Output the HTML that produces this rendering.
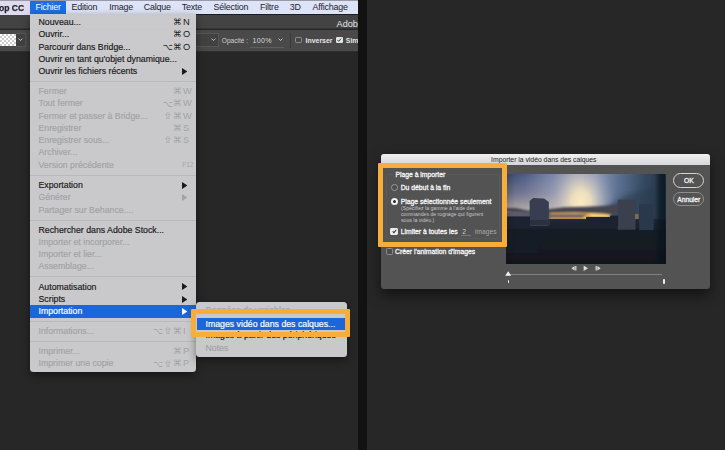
<!DOCTYPE html>
<html lang="fr"><head><meta charset="utf-8"><title>Importer la vidéo dans des calques</title>
<style>
*{margin:0;padding:0;box-sizing:border-box}
html,body{width:725px;height:450px;overflow:hidden;background:#121212}
body{position:relative;font-family:"Liberation Sans","DejaVu Sans",sans-serif;font-size:8.75px;color:#1b1b1b;-webkit-font-smoothing:antialiased}
.abs{position:absolute}
#left{left:0;top:0;width:358px;height:450px;background:#272727;overflow:hidden}
#right{left:367px;top:0;width:358px;height:450px;background:#272727;overflow:hidden}
#mbar{left:0;top:0;width:358px;height:13.7px;background:#dde4f7;border-top:1px solid #9a9aa6}
#mbar .app{left:0;top:0;width:30px;height:13.7px;background:#dedbee}
#mbar span{position:absolute;top:.2px;line-height:13px;font-size:8.9px;letter-spacing:-.18px;color:#23232b;white-space:nowrap}
#mbar .hl{left:30px;top:0;width:36px;height:13.7px;background:#1b6fe4}
#tbar{left:0;top:13.7px;width:358px;height:15.8px;background:#434343;border-top:.6px solid #1c1c1c;border-bottom:.7px solid #353535}
#obar{left:0;top:29.5px;width:358px;height:22px;background:#494949;border-bottom:1px solid #2e2e2e}
.menu{background:rgba(206,206,209,.97);box-shadow:0 3px 8px rgba(0,0,0,.45)}
.mi{position:absolute;left:0;right:0;height:12.25px;line-height:12.25px;white-space:nowrap}
.mi b{position:absolute;left:9px;top:.4px;font-weight:normal;-webkit-text-stroke:.18px currentColor}
.mi i{position:absolute;right:13.6px;top:.4px;font-style:normal;font-size:8.7px;letter-spacing:.3px}
.mi k{position:absolute;left:100%;top:0;margin-left:1.1px;font-size:9.3px;letter-spacing:0}
.mi.d{color:#a3a3a6}
.mi .ar{position:absolute;right:8.2px;top:3px;width:5.4px;height:7px;fill:currentColor}
.mi u{text-decoration:none;font-size:9.4px;line-height:0;position:relative;top:.3px;display:inline-block;transform:scaleX(1.3);margin:0 .9px 0 .5px}
.mi s{text-decoration:none;font-size:8.6px;line-height:0;position:relative;top:.2px;margin-right:-.2px}
.sep{position:absolute;left:0;right:0;height:1px;background:#b9b9bc}

#dlg{left:13.5px;top:154px;width:329px;height:134.5px;background:#535353;border-radius:3px;box-shadow:0 6px 14px rgba(0,0,0,.55);color:#dcdcdc}
#dt{left:0;top:0;width:329px;height:10.9px;background:linear-gradient(#f0f0f0,#d6d6da);border-radius:3px 3px 0 0;color:#222;font-size:6.8px;line-height:11.4px;text-align:center;padding-right:2.4px}
.t{font-size:6.8px;line-height:10px;white-space:nowrap;color:#dedede}
.t.w{color:#f4f4f4;-webkit-text-stroke:.3px #f4f4f4}
.s{font-size:5.15px;line-height:5.85px;white-space:nowrap;color:#c6c6c6}
.rad{width:7.2px;height:7.2px;border-radius:50%;border:.9px solid #9a9a9a;background:#4c4c4c}
.rad.on{width:7.6px;height:7.6px;border:2.4px solid #f2f2f2;background:#2c2c2c}
.cb{width:7.2px;height:7.2px;border-radius:1.4px;border:.9px solid #8c8c8c;background:#4d4d4d}
.cb.on{border:none;background:#ececec}
.btn{width:31.2px;height:14.7px;border:1px solid;border-radius:8px;font-size:6.7px;line-height:14.4px;text-align:center;color:#f2f2f2;-webkit-text-stroke:.3px #f2f2f2}
</style></head><body>
<div id="left" class="abs">
  <div id="tbar" class="abs"><span class="abs" style="left:336.5px;top:3px;color:#e6e6e6;font-size:9.2px;line-height:12px">Adobe</span></div>
  <div id="obar" class="abs">
    <div class="abs" style="left:0;top:4px;width:16px;height:12.6px;background:#fff;background-image:linear-gradient(45deg,#ccc 25%,transparent 25%,transparent 75%,#ccc 75%),linear-gradient(45deg,#ccc 25%,transparent 25%,transparent 75%,#ccc 75%);background-size:4px 4px;background-position:0 0,2px 2px"></div>
    <div class="abs" style="left:16px;top:3.5px;width:9.5px;height:13.6px;background:#414141;border:1px solid #565656;border-left:none"></div>
    <svg class="abs" style="left:18px;top:8.5px" width="5" height="3.4" viewBox="0 0 6 4"><path d="M.7.7 3 3 5.3.7" fill="none" stroke="#d4d4d4" stroke-width="1.1"/></svg>
    <div class="abs" style="left:196px;top:3.5px;width:23px;height:13.6px;background:#414141;border:1px solid #565656;border-left:none"></div>
    <svg class="abs" style="left:210.5px;top:8.5px" width="5" height="3.4" viewBox="0 0 6 4"><path d="M.7.7 3 3 5.3.7" fill="none" stroke="#d4d4d4" stroke-width="1.1"/></svg>
    <span class="abs" style="left:221.8px;top:5px;font-size:6.6px;line-height:11px;color:#d0d0d0;white-space:nowrap">Opacité :</span>
    <span class="abs" style="left:252.6px;top:5px;font-size:7px;letter-spacing:.3px;line-height:11px;color:#dcdcdc;white-space:nowrap">100%</span>
    <div class="abs" style="left:250px;top:17px;width:34px;height:1px;background:#5e5e5e"></div>
    <svg class="abs" style="left:277.6px;top:8.5px" width="5" height="3.4" viewBox="0 0 6 4"><path d="M.7.7 3 3 5.3.7" fill="none" stroke="#d4d4d4" stroke-width="1.1"/></svg>
    <div class="abs" style="left:290px;top:3px;width:1px;height:15px;background:#3a3a3a"></div>
    <div class="abs" style="left:295.4px;top:7.2px;width:6.6px;height:6.6px;border:1px solid #8e8e8e;border-radius:1.3px;background:#474747"></div>
    <span class="abs" style="left:305.6px;top:5px;font-size:6.9px;font-weight:bold;line-height:11px;color:#e8e8e8;white-space:nowrap">Inverser</span>
    <div class="abs" style="left:336.4px;top:7.2px;width:6.6px;height:6.6px;border-radius:1.3px;background:#e4e4e4"></div>
    <svg class="abs" style="left:337.4px;top:8.4px" width="4.6" height="4.2" viewBox="0 0 44 40"><path d="M6 20 17 32 38 6" fill="none" stroke="#333" stroke-width="9"/></svg>
    <span class="abs" style="left:345.8px;top:5px;font-size:6.9px;font-weight:bold;line-height:11px;color:#e8e8e8;white-space:nowrap">Simuler</span>
  </div>
  <div id="mbar" class="abs">
    <div class="app abs"></div><div class="hl abs"></div>
    <span style="left:-1.5px;font-weight:bold;font-size:9.5px;letter-spacing:0;top:-.3px;transform:scaleX(.9);transform-origin:0 50%;-webkit-text-stroke:.25px #23232b">op CC</span>
    <span style="left:35.5px;color:#fff">Fichier</span>
    <span style="left:71.5px">Edition</span>
    <span style="left:109.3px">Image</span>
    <span style="left:143.8px">Calque</span>
    <span style="left:181.8px">Texte</span>
    <span style="left:213.4px">Sélection</span>
    <span style="left:260px">Filtre</span>
    <span style="left:289.8px">3D</span>
    <span style="left:312.6px">Affichage</span>
  </div>
  <!-- main menu -->
  <div class="menu abs" style="left:29.5px;top:13.7px;width:166px;height:358px;border-radius:0 0 3.5px 3.5px">
    <div class="mi" style="top:2.1px"><b>Nouveau...</b><i>⌘<k>N</k></i></div>
    <div class="mi" style="top:14.4px"><b>Ouvrir...</b><i>⌘<k>O</k></i></div>
    <div class="mi" style="top:26.6px"><b>Parcourir dans Bridge...</b><i><s>⌥</s>⌘<k>O</k></i></div>
    <div class="mi" style="top:38.9px"><b>Ouvrir en tant qu'objet dynamique...</b></div>
    <div class="mi" style="top:51px"><b>Ouvrir les fichiers récents</b><svg class="ar" viewBox="0 0 55 70"><path d="M0 0 55 35 0 70z"/></svg></div>
    <div class="sep" style="top:67.6px"></div>
    <div class="mi d" style="top:71px"><b>Fermer</b><i>⌘<k>W</k></i></div>
    <div class="mi d" style="top:83.3px"><b>Tout fermer</b><i><s>⌥</s>⌘<k>W</k></i></div>
    <div class="mi d" style="top:95.5px"><b>Fermer et passer à Bridge...</b><i><u>⇧</u>⌘<k>W</k></i></div>
    <div class="mi d" style="top:107.8px"><b>Enregistrer</b><i>⌘<k>S</k></i></div>
    <div class="mi d" style="top:120px"><b>Enregistrer sous...</b><i><u>⇧</u>⌘<k>S</k></i></div>
    <div class="mi d" style="top:132.3px"><b>Archiver...</b></div>
    <div class="mi d" style="top:144.5px"><b>Version précédente</b><i style="font-size:6.5px;right:2px;letter-spacing:0;top:1px">F12</i></div>
    <div class="sep" style="top:161.4px"></div>
    <div class="mi" style="top:165px"><b>Exportation</b><svg class="ar" viewBox="0 0 55 70"><path d="M0 0 55 35 0 70z"/></svg></div>
    <div class="mi d" style="top:177.2px"><b>Générer</b><svg class="ar" viewBox="0 0 55 70"><path d="M0 0 55 35 0 70z"/></svg></div>
    <div class="mi d" style="top:189.5px"><b>Partager sur Behance....</b></div>
    <div class="sep" style="top:206.3px"></div>
    <div class="mi" style="top:209.6px"><b>Rechercher dans Adobe Stock...</b></div>
    <div class="mi d" style="top:221.9px"><b>Importer et incorporer...</b></div>
    <div class="mi d" style="top:234.1px"><b>Importer et lier...</b></div>
    <div class="mi d" style="top:246.4px"><b>Assemblage...</b></div>
    <div class="sep" style="top:262.7px"></div>
    <div class="mi" style="top:266.7px"><b>Automatisation</b><svg class="ar" viewBox="0 0 55 70"><path d="M0 0 55 35 0 70z"/></svg></div>
    <div class="mi" style="top:279px"><b>Scripts</b><svg class="ar" viewBox="0 0 55 70"><path d="M0 0 55 35 0 70z"/></svg></div>
    <div class="mi" style="top:291.6px;height:12.5px;background:#1a66da;color:#fff"><b style="top:-.5px">Importation</b><svg class="ar" viewBox="0 0 55 70"><path d="M0 0 55 35 0 70z"/></svg></div>
    <div class="sep" style="top:307.4px"></div>
    <div class="mi d" style="top:311px"><b>Informations...</b><i><s>⌥</s><u>⇧</u>⌘<k>I</k></i></div>
    <div class="sep" style="top:327.7px"></div>
    <div class="mi d" style="top:331.2px"><b>Imprimer...</b><i>⌘<k>P</k></i></div>
    <div class="mi d" style="top:343.4px"><b>Imprimer une copie</b><i><s>⌥</s><u>⇧</u>⌘<k>P</k></i></div>
  </div>
  <!-- submenu -->
  <div class="menu abs" style="left:195.5px;top:302.4px;width:151px;height:54.3px;border-radius:3.5px">
    <div class="mi d" style="top:1.4px"><b style="left:10px">Données de variables...</b></div>
    <div class="mi" style="top:15.5px;height:12px;left:1px;right:1.5px;background:#1a66da;color:#fff"><b style="left:9px;top:-.3px">Images vidéo dans des calques...</b></div>
    <div class="mi" style="top:26.6px"><b style="left:10px">Images à partir des périphériques</b></div>
    <div class="mi d" style="top:39.1px"><b style="left:10px">Notes</b></div>
  </div>
  <div class="abs" style="left:191.2px;top:308.7px;width:159.3px;height:28.6px;border:5.5px solid #f6ad3a;border-radius:1px"></div>
</div>
<div id="right" class="abs">
  <div id="dlg" class="abs">
    <div id="dt" class="abs">Importer la vidéo dans des calques</div>
    <!-- group -->
    <div class="abs" style="left:5.5px;top:20.3px;width:113.6px;height:64.6px;border:1px solid #5a5a5a;border-radius:2px"></div>
    <span class="t w abs" style="left:12.9px;top:15.5px;background:#535353;padding:0 2px">Plage à importer</span>
    <div class="rad abs" style="left:10.3px;top:29.6px"></div>
    <span class="t w abs" style="left:20.2px;top:28.9px">Du début à la fin</span>
    <div class="rad on abs" style="left:10.1px;top:43.7px"></div>
    <span class="t w abs" style="left:20.2px;top:42.5px">Plage sélectionnée seulement</span>
    <span class="s abs" style="left:20.5px;top:52.1px">(Spécifiez la gamme à l'aide des<br>commandes de rognage qui figurent<br>sous la vidéo.)</span>
    <div class="cb on abs" style="left:9.9px;top:73.7px"></div>
    <svg class="abs" style="left:11.0px;top:75.0px" width="5" height="4.6" viewBox="0 0 44 40"><path d="M6 20 17 32 38 6" fill="none" stroke="#333" stroke-width="9"/></svg>
    <span class="t w abs" style="left:20.2px;top:72.8px">Limiter à toutes les</span>
    <span class="t abs" style="left:81.8px;top:72.8px;color:#d0d0d0">2</span>
    <div class="abs" style="left:80.1px;top:81.4px;width:10px;height:1px;background:#7a7a7a"></div>
    <span class="t abs" style="left:94.6px;top:72.8px;color:#a9a9a9;font-size:6.65px">images</span>
    <div class="cb abs" style="left:5.0px;top:94.0px"></div>
    <span class="t w abs" style="left:14.6px;top:92.9px">Créer l'animation d'images</span>
    <!-- photo -->
    <svg class="abs" style="left:125.9px;top:20px" width="159.6" height="89.7" viewBox="0 0 159.4 89.6">
      <defs>
        <linearGradient id="sky" x1="0" y1="0" x2="1" y2="0"><stop offset="0" stop-color="#38486f"/><stop offset=".12" stop-color="#4d5c86"/><stop offset=".26" stop-color="#7280a5"/><stop offset=".42" stop-color="#98a0ba"/><stop offset=".56" stop-color="#8c9ab6"/><stop offset=".7" stop-color="#5d7292"/><stop offset=".85" stop-color="#384d66"/><stop offset="1" stop-color="#203243"/></linearGradient>
        <linearGradient id="hz" x1="0" y1="0" x2="0" y2="1"><stop offset="0" stop-color="#d9c4b0" stop-opacity="0"/><stop offset=".45" stop-color="#d0bcb4" stop-opacity=".3"/><stop offset="1" stop-color="#e6d0b4" stop-opacity=".85"/></linearGradient>
        <radialGradient id="sun" cx="75" cy="29" r="40" gradientUnits="userSpaceOnUse" gradientTransform="translate(75 29) scale(.85 1.15) translate(-75 -29)"><stop offset="0" stop-color="#fcecc0"/><stop offset=".28" stop-color="#f2e2be" stop-opacity=".92"/><stop offset=".6" stop-color="#d4ccc4" stop-opacity=".45"/><stop offset="1" stop-color="#9aa0b4" stop-opacity="0"/></radialGradient>
        <linearGradient id="gnd" x1="0" y1="0" x2="0" y2="1"><stop offset="0" stop-color="#222937"/><stop offset=".25" stop-color="#171d26"/><stop offset="1" stop-color="#10161c"/></linearGradient>
        <linearGradient id="wedge" x1="0" y1="0" x2="1" y2="0"><stop offset="0" stop-color="#4a5d78"/><stop offset=".5" stop-color="#31455b"/><stop offset="1" stop-color="#1d2c3a"/></linearGradient>
        <filter id="bl" x="-5%" y="-5%" width="110%" height="110%"><feGaussianBlur stdDeviation=".6"/></filter>
        <filter id="bl2" x="-20%" y="-40%" width="140%" height="180%"><feGaussianBlur stdDeviation="1.1"/></filter>
        <filter id="bl3" x="-30%" y="-30%" width="160%" height="160%"><feGaussianBlur stdDeviation="3"/></filter>
        <linearGradient id="vig" x1="0" y1="0" x2="1" y2="0"><stop offset="0" stop-color="#000" stop-opacity=".12"/><stop offset=".06" stop-color="#000" stop-opacity="0"/><stop offset=".93" stop-color="#06121a" stop-opacity="0"/><stop offset=".965" stop-color="#06121a" stop-opacity=".6"/><stop offset="1" stop-color="#06121a" stop-opacity=".75"/></linearGradient>
      </defs>
      <rect width="159.4" height="89.6" fill="url(#sky)"/>
      <rect width="78" height="42" fill="url(#hz)"/>
      <path d="M88 40 L118 22 L150 12 L175 8 L175 60 L88 60Z" fill="url(#wedge)" filter="url(#bl3)"/>
      <rect width="159.4" height="60" fill="url(#sun)"/>
      <g filter="url(#bl2)">
        <path d="M-4 34 L10 34 L22 36.5 L44 35 L58 33.2 L80 32.6 L100 31.6 L113 30 L113 41 L96 39.5 L70 38.6 L40 39 L20 38.6 L-4 37Z" fill="#44444f"/>
        <path d="M44 39 L70 38.6 L96 39.6 L104 41 L104 46 L44 46Z" fill="#efb254"/>
        <path d="M84 40 L104 41 L104 45 L86 45Z" fill="#ffd476"/>
        <path d="M40 40 L82 40 L76 44 L40 44Z" fill="#6e6460"/>
        <path d="M-4 38 L44 39 L44 44 L-4 44Z" fill="#5a586a"/>
      </g>
      <g filter="url(#bl)">
        <rect x="-3" y="44.8" width="166" height="50" fill="url(#gnd)"/>
        <path d="M23.6 27 L27 24 L38 24.6 L42.8 28 L42.8 52 L23.6 52Z" fill="#383e51"/>
        <rect x="111.6" y="25.6" width="17.8" height="30" fill="#3a4150"/>
        <rect x="133" y="30" width="14.5" height="26" fill="#2a384b"/>
        <rect x="129" y="40" width="3.4" height="5" fill="#8a6a48"/>
        <rect x="80" y="42.8" width="32" height="10" fill="#1c222d"/>
        <rect x="-2" y="42.4" width="26" height="10" fill="#1e2431"/>
        <rect x="104" y="41.5" width="8" height="4" fill="#1c222d"/>
        <rect x="0" y="61" width="33" height="18" fill="#161d26"/>
        <rect x="24" y="46" width="20" height="5" fill="#2a303d"/>
      </g>
      
      <rect width="159.4" height="89.6" fill="url(#vig)"/>
    </svg>
    <!-- buttons -->
    <div class="btn abs" style="left:292.7px;top:19.1px;border-color:#d4d4d4">OK</div>
    <div class="btn abs" style="left:292.7px;top:37.5px;border-color:#8e8e8e">Annuler</div>
    <!-- transport -->
    <svg class="abs" style="left:188px;top:110.8px" width="36" height="6.4" viewBox="0 0 36 6.4">
      <g fill="#dcdcdc"><path d="M2.4 3.2 5.6 1v4.4zM6.2 1h1.2v4.4H6.200z"/><path d="M14.6.5 19 3.200l-4.400 2.700z"/><path d="M26.600 1h1.200v4.400H26.600zM28.400 1 31.600 3.200l-3.200 2.200z"/></g>
    </svg>
    <div class="abs" style="left:126.5px;top:120.2px;width:155.4px;height:1.2px;background:#808080"></div>
    <svg class="abs" style="left:124.800px;top:117px" width="6.4" height="5.4" viewBox="0 0 6.4 5.4"><path d="M3.200 .2 6.200 4.800H.2z" fill="#f4f4f4"/></svg>
    <div class="abs" style="left:127px;top:125.600px;width:1.600px;height:3.800px;background:#ececec;border-radius:.5px"></div>
    <div class="abs" style="left:282.400px;top:125.200px;width:2.200px;height:4.600px;background:#ececec;border-radius:.8px"></div>
  </div>
  <div class="abs" style="left:11.1px;top:163.1px;width:129.3px;height:84.2px;border:5.3px solid #f6ad3a;border-radius:1px"></div>
</div>
</body></html>
